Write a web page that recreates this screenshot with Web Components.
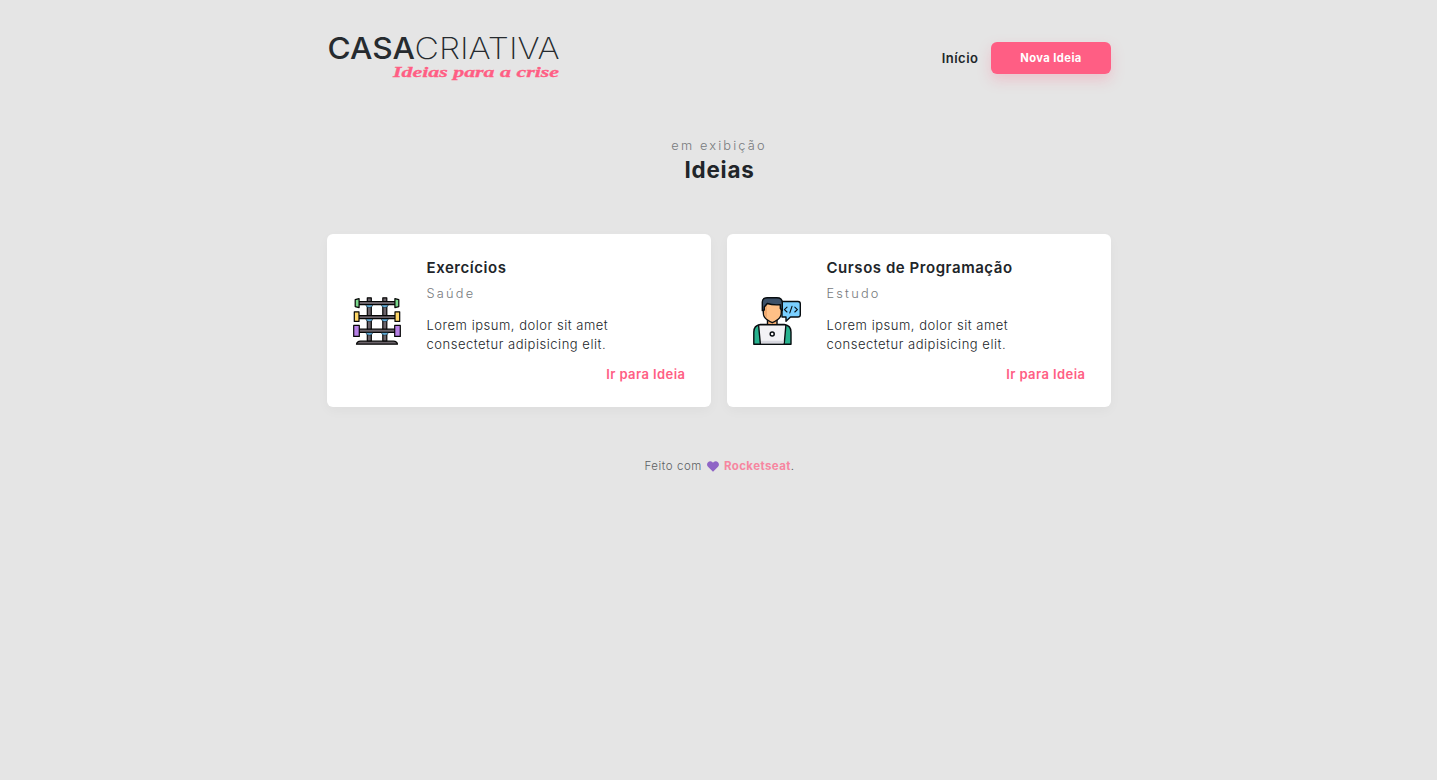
<!DOCTYPE html>
<html lang="pt-BR">
<head>
<meta charset="utf-8">
<title>Casa Criativa</title>
<style>
html,body{margin:0;min-height:100%;background:#e5e5e5}
body{font-family:Inter,"Open Sans",sans-serif;color:#212529}
</style>
</head>
<body>
<casa-page></casa-page>
<script>
const define=(name,html)=>customElements.define(name,class extends HTMLElement{
  constructor(){super();const t=document.createElement('template');t.innerHTML=html;
    this.attachShadow({mode:'open'}).append(t.content.cloneNode(true));}
});

define('casa-logo',`<style>:host{display:block;width:236px;height:50px}svg{display:block;overflow:visible}</style>
<svg width="236" height="50" viewBox="0 0 236 50">
<g font-family="Inter,sans-serif" font-size="29.5" fill="#262b2f">
<text x="0.5" y="27" font-weight="450" textLength="87.500" lengthAdjust="spacingAndGlyphs">CASA</text>
<text x="87.5" y="27" font-weight="250" textLength="145" lengthAdjust="spacingAndGlyphs">CRIATIVA</text></g>
<text x="66" y="45" font-family="'Liberation Serif',serif" font-size="14.5" font-style="italic" font-weight="700" fill="#ff5e84" stroke="#ff5e84" stroke-width=".3" textLength="166" lengthAdjust="spacingAndGlyphs">Ideias para a crise</text>
</svg>`);

define('casa-button',`<style>:host{display:flex;width:120px;height:32px;border-radius:6px;background:#ff5e84;color:#fff;align-items:center;justify-content:center;font-size:11.2px;font-weight:700;letter-spacing:.42px;box-shadow:0 6px 14px rgba(255,94,132,.25)}</style><span><slot></slot></span>`);

define('casa-header',`<style>:host{display:flex;justify-content:space-between;height:50px;padding-top:32px}
nav{display:flex;align-items:center;height:32px;margin-top:10px;gap:12.5px}
a{font-size:13px;font-weight:600;letter-spacing:.5px}</style>
<casa-logo></casa-logo><nav><a>Início</a><casa-button>Nova Ideia</casa-button></nav>`);

define('section-title',`<style>:host{display:block;text-align:center;margin-top:55px}
p,h1{margin:0}p{font-size:12.8px;font-weight:300;letter-spacing:2.15px;line-height:17px;color:#777a7d}
h1{font-size:22.4px;line-height:27px;font-weight:700;margin:2px 0 1px;letter-spacing:.8px;padding-left:1px}</style>
<p><slot name="sub"></slot></p><h1><slot></slot></h1>`);

define('bars-icon',`<style>:host{display:block;width:48px;height:48px}svg{display:block}</style>
<svg width="48" height="48" viewBox="0 0 48 48" stroke="#060606" stroke-width="1.2" stroke-linejoin="round">
<g fill="#6b636a"><path d="M14.300 .8h4v43.500h-4zM29.800 .8h4v43.500h-4z"/><path d="M5.500 4.500h37v3.100h-37zM5.500 18.600h37v3.100h-37zM5.500 32.200h37v3.100h-37z"/><path d="M3.500 47.200q.5-3 4-3h33q3.500 0 4 3z"/></g>
<g fill="#68b9e8" stroke-width=".5"><path d="M12.800 8h7q-.5 2.500-3.500 2.500t-3.500-2.500zM28.300 8h7q-.5 2.500-3.500 2.500t-3.500-2.500zM12.800 22.100h7q-.5 2.500-3.500 2.500t-3.500-2.500zM28.300 22.100h7q-.5 2.500-3.500 2.500t-3.500-2.500zM12.800 35.700h7q-.5 2.500-3.500 2.500t-3.500-2.500zM28.300 35.700h7q-.5 2.500-3.500 2.500t-3.500-2.500z"/></g>
<path fill="#7bd98d" d="M2.200 2.600l3.900-1v9l-3.900-1zM41.900 1.600l3.900 1v7l-3.900 1z"/>
<path fill="#ffd768" d="M1.300 14.800H6v9.600H1.300zM42 14.800h4.700v9.600H42z"/>
<path fill="#b780e6" d="M.7 28.400h5.600v11H.7zM41.700 28.400h5.600v11h-5.600z"/>
</svg>`);

define('coder-icon',`<style>:host{display:block;width:48px;height:48px}svg{display:block}</style>
<svg width="48" height="48" viewBox="0 0 48 48" stroke="#080d10" stroke-width="1.400" stroke-linejoin="round">
<path fill="#7acfff" d="M29 4.500h16q2.300 0 2.300 2.300v10.900q0 2.300-2.300 2.300h-7.500L33 24.300V20h-4z"/>
<path fill="none" d="M34 10.200l-2.600 2.400 2.600 2.400M41.800 10.200l2.600 2.400-2.600 2.400M39 9.300l-2.200 6.600" stroke-width="1.100" stroke-linecap="round"/>
<path fill="#28b28e" d="M.8 47.200V35q0-6.500 6.500-7.500h24Q38 28.500 38 35v12.200z"/>
<path fill="#efa96f" d="M14.500 20h9.500v8h-9.500z"/>
<path fill="#ffc086" d="M10.300 6h18v9.500q0 4.500-3.500 7t-5.500 3.200q-2-.7-5.500-3.200t-3.500-7z"/>
<path fill="#efa96f" stroke="none" d="M11 8h3v13.600q-3-2.600-3-6z"/>
<path fill="#3d5168" d="M9.300 13.500V5q0-4.200 5-4.200h9.500q5.500 0 5.500 5v7.700l-2-2V7.800q-8 .5-13-1.300l-3 3.500v3z"/>
<path fill="#f2f2f5" d="M7 27.700h24.500q1.500 0 1.300 1.500l-1.600 18H7.400L5.700 29.200q-.1-1.500 1.300-1.500z"/>
<path fill="#d7d7df" stroke="none" d="M8 43.700h22.500l-.2 2.500H8.200z"/><circle cx="19.200" cy="37" r="2" fill="#fff" stroke-width="1.500"/>
</svg>`);

define('idea-card',`<style>:host{display:flex;align-items:center;box-sizing:border-box;height:173px;padding:0 26px;gap:25.500px;background:#fff;border-radius:6px;box-shadow:0 4px 12px rgba(0,0,0,.035)}
div{flex:1;display:flex;flex-direction:column}h2,p{margin:0}
h2{font-size:15px;line-height:20px;font-weight:600;letter-spacing:.55px}
.cat{font-size:12.800px;font-weight:300;line-height:16px;letter-spacing:2.2px;color:#777a7d;margin-top:8px}
.text{font-size:13px;font-weight:300;line-height:19px;margin-top:14px;letter-spacing:.52px}
a{align-self:flex-end;font-size:13px;font-weight:600;line-height:16px;color:#ff5e84;margin:12px -.4px 1px 0;letter-spacing:.42px}</style>
<slot name="icon"></slot><div><h2><slot name="title"></slot></h2><p class="cat"><slot name="cat"></slot></p><p class="text"><slot></slot></p><a>Ir para Ideia</a></div>`);

define('casa-footer',`<style>:host{display:flex;justify-content:center;align-items:center;height:16px;margin-top:51px;font-size:11.500px;font-weight:300;opacity:.7;padding-left:1px}
svg{margin:1px 5px 0 5px}.f{letter-spacing:.57px}.r{letter-spacing:.4px}b{font-weight:700;color:#ff5e84}</style>
<span class="f">Feito com</span><svg width="12" height="11" viewBox="0 0 12 11"><path fill="#6b2fb9" d="M6 10.700L1 5.800C-1.300 3 1 .2 3.300.2 4.600.2 5.500 1 6 1.800 6.500 1 7.400.2 8.700.2 11 .2 13.300 3 11 5.800z"/></svg><span class="r"><b>Rocketseat</b>.</span>`);

define('casa-page',`<style>:host{display:block;width:784px;margin:0 auto;padding-left:1px}
main{display:grid;grid-template-columns:1fr 1fr;gap:16px;margin-top:51px}</style>
<casa-header></casa-header>
<section-title><span slot="sub">em exibição</span>Ideias</section-title>
<main><idea-card><bars-icon slot="icon"></bars-icon><span slot="title">Exercícios</span><span slot="cat">Saúde</span>Lorem ipsum, dolor sit amet<br>consectetur adipisicing elit.</idea-card>
<idea-card><coder-icon slot="icon"></coder-icon><span slot="title">Cursos de Programação</span><span slot="cat">Estudo</span>Lorem ipsum, dolor sit amet<br>consectetur adipisicing elit.</idea-card></main>
<casa-footer></casa-footer>`);
</script>
</body>
</html>
